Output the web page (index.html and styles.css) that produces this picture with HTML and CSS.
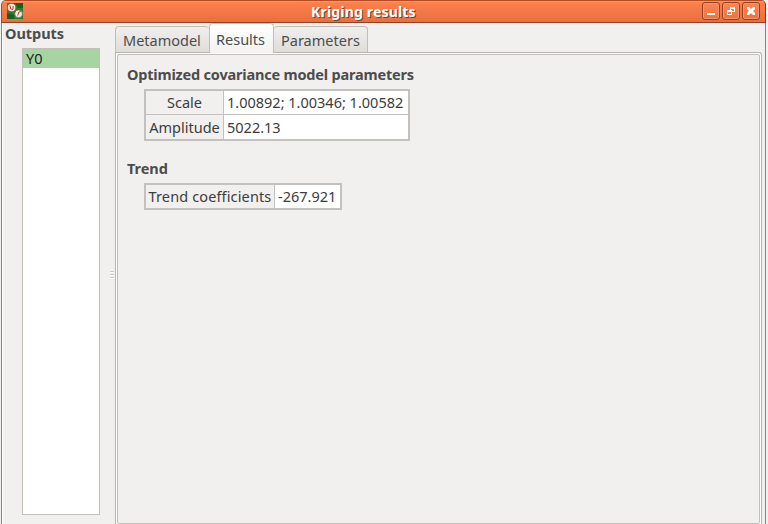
FILE: index.html
```html
<!DOCTYPE html>
<html lang="en">
<head>
<meta charset="utf-8">
<title>Kriging results</title>
<link rel="stylesheet" href="styles.css">
</head>
<body>
<div class="window">
  <header class="titlebar">
    <svg class="app-icon" width="16" height="16" viewBox="0 0 16 16">
      <path fill="#287d2c" d="M0 0h16v16H0z"/>
      <path fill="#17611c" d="M8 0h8v5h-5zM0 10l7 2v4H0z"/>
      <circle cx="4.6" cy="4.6" r="4.1" fill="#f3eee3" stroke="#775743" stroke-width=".7"/>
      <circle cx="11.6" cy="10.8" r="3.9" fill="#f3eee3" stroke="#775743" stroke-width=".7"/>
      <path d="M3 2.5l.7 3.3 2 .8.6-3.6M10.7 12.5l1.2-3.5 2-.5" fill="none" stroke="#d62c2c"/>
    </svg>
    <h1 class="title"><span>Kriging results</span></h1>
    <div class="controls">
      <button class="control" aria-label="Minimize"><svg width="18" height="18" viewBox="0 0 18 18"><path fill="#fff" d="M5 11h8v2H5z"/></svg></button>
      <button class="control" aria-label="Restore"><svg width="18" height="18" viewBox="0 0 18 18"><path fill="#fff" fill-rule="evenodd" d="M8 5h5v5h-3v3H5V8h3zM9 7v1h1v1h2V7zM6 10v2h3v-2z"/></svg></button>
      <button class="control" aria-label="Close"><svg width="18" height="18" viewBox="0 0 18 18"><path fill="#fff" d="M5 5h2l2 2 2-2h2v2l-2 2 2 2v2h-2l-2-2-2 2H5v-2l2-2-2-2z"/></svg></button>
    </div>
  </header>
  <main class="content">
    <aside class="sidebar">
      <h2 class="heading">Outputs</h2>
      <ul class="outputs"><li class="selected">Y0</li></ul>
    </aside>
    <div class="splitter"><i></i><i></i><i></i></div>
    <section class="tabs">
      <nav class="tabbar">
        <div class="tab first">Metamodel</div>
        <div class="tab active">Results</div>
        <div class="tab last">Parameters</div>
      </nav>
      <div class="pane">
        <div class="page">
          <h2 class="heading long-heading">Optimized covariance model parameters</h2>
          <div class="table covariance">
            <div class="cell label">Scale</div>
            <div class="cell value">1.00892; 1.00346; 1.00582</div>
            <div class="cell label lower">Amplitude</div>
            <div class="cell value lower">5022.13</div>
          </div>
          <h2 class="heading trend-heading">Trend</h2>
          <div class="table trend">
            <div class="cell label coefficients">Trend coefficients</div>
            <div class="cell value">-267.921</div>
          </div>
        </div>
      </div>
    </section>
  </main>
</div>
</body>
</html>
```
FILE: styles.css
```css
* { box-sizing: border-box; }
body { margin: 0; height: 524px; overflow: hidden; background: #f1f0ee; color: #4c4c4c; font: 14.5px/20px "Noto Sans", sans-serif; }
h1, h2, ul { margin: 0; padding: 0; font-size: inherit; list-style: none; white-space: nowrap; }
.window { width: 765px; height: 524px; margin-left: 1px; display: flex; flex-direction: column; }
.titlebar { height: 23px; flex: none; display: flex; align-items: flex-start; background: linear-gradient(#b64d22 0 1px, #ff986b 1px, #fc7e4b 3px, #f37a48 11px, #e96e3e 22px, #8b432a 22px); border-left: 1px solid #a54d2a; border-right: 1px solid #813719; border-radius: 5px 5px 0 0; }
.app-icon { margin: 3px 0 0 5px; }
.title { flex: 1; padding-left: 288px; line-height: 23px; color: #fff; text-shadow: 1px 1px 0 #704432; font-size: 14px; letter-spacing: .18px; }
.controls { display: flex; gap: 2px; margin: 2px 5px 0 0; }
.control { width: 18px; height: 18px; border: 1px solid #94401f; border-radius: 3px; padding: 0; background: linear-gradient(#fa8656, #ed7240); box-shadow: inset 0 0 0 1px #fa9469; }
.control svg { display: block; margin: -1px; }
.content { flex: 1; display: flex; border-left: 1px solid #858482; border-right: 1px solid #858482; box-shadow: inset 1px 0 #fff; min-height: 0; }
.sidebar { width: 98px; flex: none; padding-left: 3px; }
.heading { height: 22px; line-height: 20px; font-weight: 700; letter-spacing: -.05px; }
.long-heading { letter-spacing: -.19px; }
.outputs { width: 78px; height: 467px; margin: 3px 0 0 17px; background: #fff; border: 1px solid #c2bfb8; }
.selected { height: 19px; padding-left: 3px; line-height: 18px; background: #a6d5a2; color: #202020; }
.splitter { width: 15px; flex: none; padding: 248px 0 0 10px; display: flex; flex-direction: column; gap: 1px; }
.splitter i { height: 2px; width: 4px; background: linear-gradient(#cbc9c6 50%, #fff 50%); flex: none; }
.tabs { width: 647px; flex: none; }
.tabbar { height: 29px; display: flex; align-items: flex-end; }
.tab { height: 26px; border: 1px solid #c0beb9; border-bottom: 0; border-radius: 4px 4px 0 0; background: linear-gradient(#f0efed, #dfddda); padding-left: 7px; line-height: 26px; }
.first { width: 94px; border-right: 0; }
.active { position: relative; width: 65px; height: 30px; margin-bottom: -1px; background: linear-gradient(#fff, #f2f1ef); line-height: 30px; padding-left: 6px; }
.last { width: 94px; border-left: 0; padding-left: 7px; }
.pane { height: 472px; padding: 1px 1px 0; border: 1px solid #b6b4b0; border-bottom: 0; border-radius: 0 3px 0 0; background: #fff; }
.page { height: 470px; padding: 9px 0 0 9px; border: 1px solid #c2bfba; border-radius: 2px; background: #f1f0ee; }
.table { display: grid; margin-left: 17px; gap: 1px; border: 2px solid #c3c1bd; background: #c3c1bd; }
.covariance { width: 266px; height: 52px; margin-top: 3px; grid-template: 23px 24px / 77px 184px; }
.trend { width: 198px; height: 27px; margin-top: 3px; grid-template: 23px / 128px 65px; }
.trend-heading { margin-top: 17px; }
.cell { line-height: 23px; background: #fff; padding-left: 3px; color: #3c3c3c; white-space: nowrap; }
.label { padding: 0; text-align: center; background: #f1f0ee; }
.lower { line-height: 25px; }
.coefficients { letter-spacing: .13px; }
```
